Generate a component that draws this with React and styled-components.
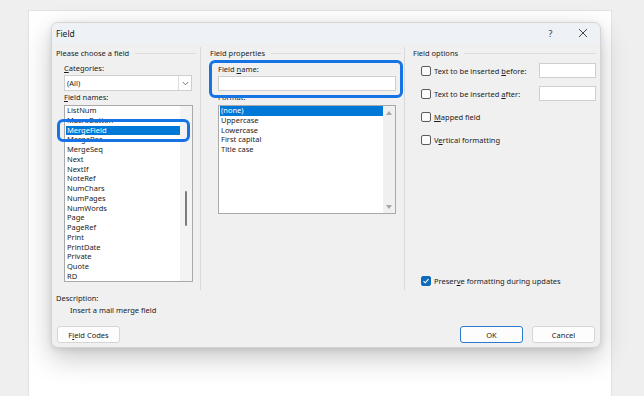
import styled, { createGlobalStyle } from "styled-components";

const GlobalStyle = createGlobalStyle`
  html, body {
    margin: 0;
    padding: 0;
    background: #efefef;
    overflow: hidden;
  }
  body {
    font-family: "Noto Sans", "Open Sans", sans-serif;
    color: #1b1b1b;
  }
`;

const fieldNames = [
  "ListNum",
  "MacroButton",
  "MergeField",
  "MergeRec",
  "MergeSeq",
  "Next",
  "NextIf",
  "NoteRef",
  "NumChars",
  "NumPages",
  "NumWords",
  "Page",
  "PageRef",
  "Print",
  "PrintDate",
  "Private",
  "Quote",
  "RD",
];

const formats = ["(none)", "Uppercase", "Lowercase", "First capital", "Title case"];

const Checkbox = ({ checked }) => (
  <Box checked={checked}>
    {checked && (
      <svg width="8" height="8" viewBox="0 0 8 8">
        <path d="M1.5 4.2 L3.2 5.8 L6.5 2.2" fill="none" stroke="#fff" strokeWidth="1.1" />
      </svg>
    )}
  </Box>
);

const App = () => {
  return (
    <>
      <GlobalStyle />
      <Screen>
        <Page>
          <Dialog>
            <TitleBar>
              <Title>Field</Title>
              <TitleButton $w={31}>?</TitleButton>
              <TitleButton $w={34}>
                <svg width="10" height="10" viewBox="0 0 10 10">
                  <path d="M1 1 L9 9 M9 1 L1 9" stroke="#333" strokeWidth="0.9" />
                </svg>
              </TitleButton>
            </TitleBar>
            <Body>
              <Columns>
                <Column $w={145} $pl={0} $pr={4} $sep>
                  <Header>
                    <span>Please choose a field</span>
                    <Rule />
                  </Header>
                  <Indent>
                    <Label>
                      <Key>C</Key>ategories:
                    </Label>
                    <Select>
                      <SelectValue>(All)</SelectValue>
                      <SelectArrow>
                        <svg width="7" height="5" viewBox="0 0 7 5">
                          <path d="M0.8 1 L3.5 3.8 L6.2 1" fill="none" stroke="#555" strokeWidth="0.8" />
                        </svg>
                      </SelectArrow>
                    </Select>
                    <Label>
                      <Key>F</Key>ield names:
                    </Label>
                    <ListWrap>
                      <ListBox $w={129} $h={177}>
                        <Items>
                          {fieldNames.map((n) => (
                            <Item key={n} selected={n === "MergeField"}>
                              {n}
                            </Item>
                          ))}
                        </Items>
                        <ThinTrack>
                          <Thumb />
                        </ThinTrack>
                      </ListBox>
                      <Callout $l={-7} $t={14} $w={133} $h={23} />
                    </ListWrap>
                  </Indent>
                </Column>

                <Column $w={204} $pl={9} $pr={3} $sep>
                  <Header>
                    <span>Field properties</span>
                    <Rule />
                  </Header>
                  <Indent>
                    <ListWrap>
                      <Label>
                        Field <Key>n</Key>ame:
                      </Label>
                      <Input $w={178} />
                      <Callout $l={-9} $t={-3} $w={194} $h={38} />
                    </ListWrap>
                    <Label $h={13}>Format:</Label>
                    <ListBox $w={178} $h={109}>
                      <Items>
                        {formats.map((f) => (
                          <Item key={f} selected={f === "(none)"}>
                            {f}
                          </Item>
                        ))}
                      </Items>
                      <ArrowTrack>
                        <Tri />
                        <Tri $down />
                      </ArrowTrack>
                    </ListBox>
                  </Indent>
                </Column>

                <Column $pl={8} $pr={2} $grow>
                  <Header>
                    <span>Field options</span>
                    <Rule />
                  </Header>
                  <Options>
                    <OptionRow>
                      <Checkbox />
                      <OptionText>
                        Text to be inserted <Key>b</Key>efore:
                      </OptionText>
                      <Input $w={57} />
                    </OptionRow>
                    <OptionRow>
                      <Checkbox />
                      <OptionText>
                        Text to be inserted <Key>a</Key>fter:
                      </OptionText>
                      <Input $w={57} />
                    </OptionRow>
                    <OptionRow>
                      <Checkbox />
                      <OptionText>
                        <Key>M</Key>apped field
                      </OptionText>
                    </OptionRow>
                    <OptionRow>
                      <Checkbox />
                      <OptionText>
                        V<Key>e</Key>rtical formatting
                      </OptionText>
                    </OptionRow>
                    <OptionRow $bottom>
                      <Checkbox checked />
                      <OptionText>
                        Preser<Key>v</Key>e formatting during updates
                      </OptionText>
                    </OptionRow>
                  </Options>
                </Column>
              </Columns>

              <DescLabel>Description:</DescLabel>
              <DescText>Insert a mail merge field</DescText>

              <Footer>
                <Button>
                  F<Key>i</Key>eld Codes
                </Button>
                <Spacer />
                <Button $primary>OK</Button>
                <Button>Cancel</Button>
              </Footer>
            </Body>
          </Dialog>
        </Page>
      </Screen>
    </>
  );
};

const Screen = styled.div`
  width: 644px;
  height: 396px;
  overflow: hidden;
  padding: 10px 32px 0 28px;
  box-sizing: border-box;
`;

const Page = styled.div`
  background: #fff;
  width: 584px;
  height: 400px;
  box-sizing: border-box;
  border: 1px solid #e2e2e2;
  padding: 11px 0 0 22px;
`;

const Dialog = styled.div`
  width: 550px;
  height: 326px;
  box-sizing: border-box;
  border: 1px solid #d4d4d4;
  border-radius: 7px;
  overflow: hidden;
  background: #f0f0f0;
  box-shadow: 0 10px 28px rgba(0, 0, 0, 0.22), 0 2px 6px rgba(0, 0, 0, 0.1);
  display: flex;
  flex-direction: column;
`;

const TitleBar = styled.div`
  height: 20px;
  display: flex;
  align-items: center;
  background: #eef2f6;
  padding-left: 4px;
`;

const Title = styled.div`
  flex: 1;
  font-size: 8.5px;
`;

const TitleButton = styled.div`
  width: ${(p) => p.$w}px;
  height: 20px;
  display: flex;
  align-items: center;
  justify-content: center;
  font-size: 9px;
  color: #333;
`;

const Body = styled.div`
  flex: 1;
  display: flex;
  flex-direction: column;
  padding: 4px 2px 4px 4px;
  font-size: 7.5px;
`;

const Columns = styled.div`
  height: 243px;
  display: flex;
`;

const Column = styled.div`
  width: ${(p) => (p.$w ? `${p.$w}px` : "auto")};
  flex: ${(p) => (p.$grow ? 1 : "none")};
  box-sizing: border-box;
  padding-left: ${(p) => p.$pl}px;
  padding-right: ${(p) => p.$pr}px;
  border-right: ${(p) => (p.$sep ? "1px solid #d9d9d9" : "none")};
  display: flex;
  flex-direction: column;
  min-width: 0;
`;

const Header = styled.div`
  height: 12px;
  display: flex;
  align-items: center;
  gap: 6px;
  white-space: nowrap;
`;

const Rule = styled.div`
  flex: 1;
  height: 1px;
  background: #dcdcdc;
`;

const Indent = styled.div`
  padding-left: 8px;
  padding-top: 3px;
  display: flex;
  flex-direction: column;
`;

const Label = styled.div`
  height: ${(p) => p.$h || 12}px;
  line-height: 12px;
  margin-bottom: 1px;
`;

const Key = styled.span`
  text-decoration: underline;
  text-underline-offset: 1px;
`;

const Select = styled.div`
  width: 128px;
  height: 16px;
  box-sizing: border-box;
  background: #fff;
  border: 1px solid #cfcfcf;
  display: flex;
  align-items: center;
`;

const SelectValue = styled.div`
  flex: 1;
  padding-left: 2px;
`;

const SelectArrow = styled.div`
  width: 12px;
  height: 100%;
  border-left: 1px solid #dcdcdc;
  display: flex;
  align-items: center;
  justify-content: center;
`;

const ListWrap = styled.div`
  position: relative;
  margin-top: 1px;
`;

const ListBox = styled.div`
  width: ${(p) => p.$w}px;
  height: ${(p) => p.$h}px;
  box-sizing: border-box;
  border: 1px solid #a9a9a9;
  background: #fff;
  display: flex;
  overflow: hidden;
`;

const Items = styled.div`
  flex: 1;
  padding-left: 1px;
`;

const Item = styled.div`
  height: 9.75px;
  line-height: 9.75px;
  padding-left: 1px;
  white-space: nowrap;
  background: ${(p) => (p.selected ? "#0078d7" : "transparent")};
  color: ${(p) => (p.selected ? "#fff" : "#1b1b1b")};
`;

const ThinTrack = styled.div`
  width: 12px;
  background: #f3f3f3;
  padding-top: 85px;
  display: flex;
  justify-content: center;
`;

const Thumb = styled.div`
  width: 2px;
  height: 35px;
  border-radius: 1px;
  background: #7d7d7d;
`;

const ArrowTrack = styled.div`
  width: 12px;
  background: #f0f0f0;
  display: flex;
  flex-direction: column;
  justify-content: space-between;
  align-items: center;
  padding: 5px 0 4px;
`;

const Tri = styled.div`
  width: 0;
  height: 0;
  border-left: 3.5px solid transparent;
  border-right: 3.5px solid transparent;
  border-bottom: ${(p) => (p.$down ? "none" : "4px solid #a6a6a6")};
  border-top: ${(p) => (p.$down ? "4px solid #a6a6a6" : "none")};
`;

const Input = styled.div`
  width: ${(p) => p.$w}px;
  height: 15px;
  box-sizing: border-box;
  background: #fff;
  border: 1px solid #cfcfcf;
  flex: none;
`;

const Callout = styled.div`
  position: absolute;
  left: ${(p) => p.$l}px;
  top: ${(p) => p.$t}px;
  width: ${(p) => p.$w}px;
  height: ${(p) => p.$h}px;
  box-sizing: border-box;
  border: 3px solid #1673e6;
  border-radius: 6px;
  pointer-events: none;
`;

const Options = styled.div`
  flex: 1;
  display: flex;
  flex-direction: column;
  gap: 8px;
  padding: 4px 0 2px 8px;
`;

const OptionRow = styled.div`
  height: 15px;
  display: flex;
  align-items: center;
  margin-top: ${(p) => (p.$bottom ? "auto" : "0")};
`;

const OptionText = styled.div`
  flex: 1;
  padding-left: 3px;
  white-space: nowrap;
`;

const Box = styled.div`
  width: 10px;
  height: 10px;
  box-sizing: border-box;
  border-radius: 2px;
  border: 1px solid ${(p) => (p.checked ? "#0f6cbd" : "#5c5c5c")};
  background: ${(p) => (p.checked ? "#0f6cbd" : "#fbfbfb")};
  display: flex;
  align-items: center;
  justify-content: center;
  flex: none;
`;

const DescLabel = styled.div`
  height: 12px;
  line-height: 12px;
  margin-top: 2px;
`;

const DescText = styled.div`
  height: 12px;
  line-height: 12px;
  padding-left: 14px;
`;

const Footer = styled.div`
  margin-top: 10px;
  display: flex;
  gap: 9px;
  padding: 0 3px 0 1px;
`;

const Spacer = styled.div`
  flex: 1;
`;

const Button = styled.div`
  width: 63px;
  height: 17px;
  box-sizing: border-box;
  border-radius: 3px;
  background: #fdfdfd;
  border: 1px solid ${(p) => (p.$primary ? "#2a7bd0" : "#d5d5d5")};
  display: flex;
  align-items: center;
  justify-content: center;
`;

export default App;
